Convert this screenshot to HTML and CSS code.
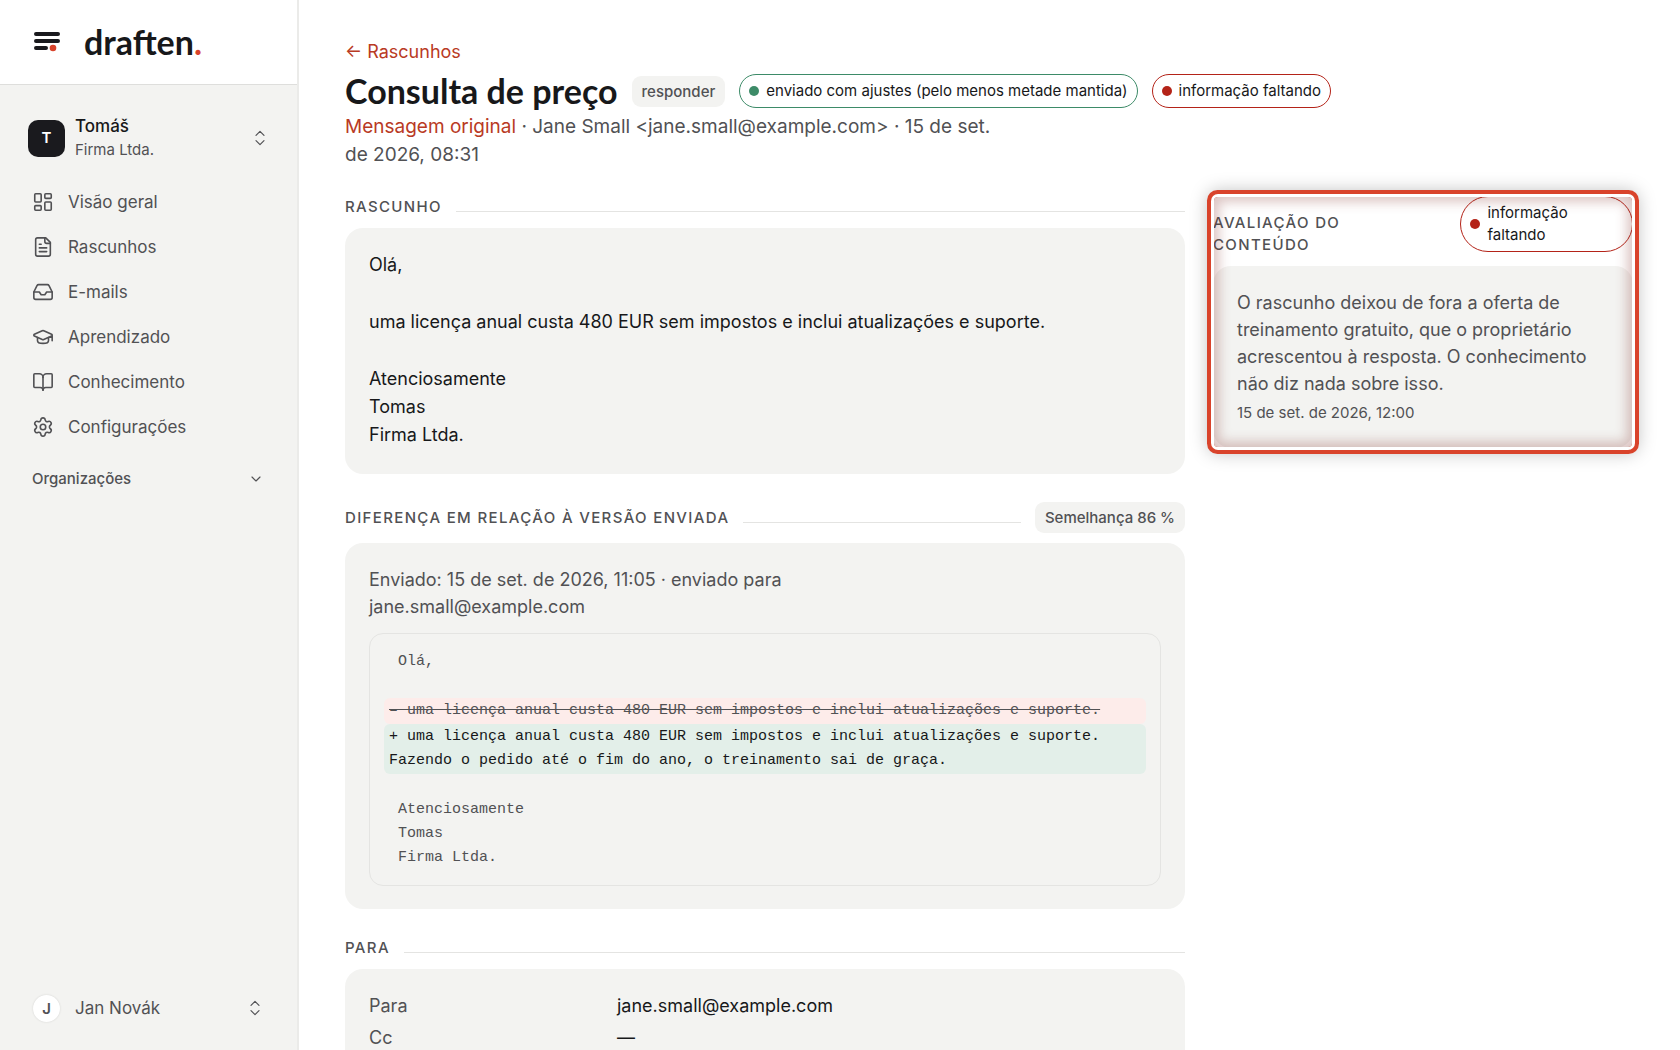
FILE: index.html
```html
<!DOCTYPE html>
<html lang="pt">
<head>
<meta charset="utf-8">
<meta name="viewport" content="width=device-width, initial-scale=1">
<title>Consulta de preço – draften</title>
<link rel="stylesheet" href="styles.css">
</head>
<body>
<div class="app">
  <aside class="sidebar">
    <a class="brand" href="#">
      <svg class="brand-mark" viewBox="0 0 26 20" aria-hidden="true">
        <path d="M2 2h22M2 9h22M2 16h10" fill="none" stroke="#1a1a1e" stroke-width="4" stroke-linecap="round"/>
        <circle cx="19" cy="16" r="3.3" fill="#d9432b"/>
      </svg>
      <span class="brand-name">draften<span class="brand-dot">.</span></span>
    </a>
    <div class="sidebar-body">
      <button class="switcher" type="button">
        <span class="avatar">T</span>
        <span class="switcher-text"><span class="switcher-name">Tomáš</span><span class="switcher-org">Firma Ltda.</span></span>
        <svg class="icon-sm" viewBox="0 0 24 24" aria-hidden="true"><path d="m6 16 6 6 6-6M6 8l6-6 6 6"/></svg>
      </button>
      <nav class="nav">
        <a href="#"><svg class="icon" viewBox="0 0 24 24" aria-hidden="true"><rect width="7" height="9" x="3" y="3" rx="1"/><rect width="7" height="5" x="14" y="3" rx="1"/><rect width="7" height="9" x="14" y="12" rx="1"/><rect width="7" height="5" x="3" y="16" rx="1"/></svg>Visão geral</a>
        <a href="#"><svg class="icon" viewBox="0 0 24 24" aria-hidden="true"><path d="M15 2H6a2 2 0 0 0-2 2v16a2 2 0 0 0 2 2h12a2 2 0 0 0 2-2V7Z"/><path d="M14 2v4a2 2 0 0 0 2 2h4M10 9H8M16 13H8M16 17H8"/></svg>Rascunhos</a>
        <a href="#"><svg class="icon" viewBox="0 0 24 24" aria-hidden="true"><path d="M22 12h-6l-2 3h-4l-2-3H2"/><path d="M5.45 5.11 2 12v6a2 2 0 0 0 2 2h16a2 2 0 0 0 2-2v-6l-3.45-6.89A2 2 0 0 0 16.76 4H7.24a2 2 0 0 0-1.79 1.11z"/></svg>E-mails</a>
        <a href="#"><svg class="icon" viewBox="0 0 24 24" aria-hidden="true"><path d="M21.42 10.922a1 1 0 0 0-.019-1.838L12.83 5.18a2 2 0 0 0-1.66 0L2.6 9.08a1 1 0 0 0 0 1.832l8.57 3.908a2 2 0 0 0 1.66 0zM22 10v6"/><path d="M6 12.5V16a6 3 0 0 0 12 0v-3.5"/></svg>Aprendizado</a>
        <a href="#"><svg class="icon" viewBox="0 0 24 24" aria-hidden="true"><path d="M12 7v14"/><path d="M3 18a1 1 0 0 1-1-1V4a1 1 0 0 1 1-1h5a4 4 0 0 1 4 4 4 4 0 0 1 4-4h5a1 1 0 0 1 1 1v13a1 1 0 0 1-1 1h-6a3 3 0 0 0-3 3 3 3 0 0 0-3-3z"/></svg>Conhecimento</a>
        <a href="#"><svg class="icon" viewBox="0 0 24 24" aria-hidden="true"><path d="M9.671 4.136a2.34 2.34 0 0 1 4.659 0 2.34 2.34 0 0 0 3.319 1.915 2.34 2.34 0 0 1 2.33 4.033 2.34 2.34 0 0 0 0 3.831 2.34 2.34 0 0 1-2.33 4.033 2.34 2.34 0 0 0-3.319 1.915 2.34 2.34 0 0 1-4.659 0 2.34 2.34 0 0 0-3.32-1.915 2.34 2.34 0 0 1-2.33-4.033 2.34 2.34 0 0 0 0-3.831A2.34 2.34 0 0 1 6.35 6.051a2.34 2.34 0 0 0 3.319-1.915"/><circle cx="12" cy="12" r="3"/></svg>Configurações</a>
      </nav>
      <button class="group" type="button">Organizações
        <svg class="icon-sm" viewBox="0 0 24 24" aria-hidden="true"><path d="m6 9 6 6 6-6"/></svg>
      </button>
      <button class="account" type="button">
        <span class="account-initial">J</span>
        <span class="account-name">Jan Novák</span>
        <svg class="icon-sm" viewBox="0 0 24 24" aria-hidden="true"><path d="m6 16 6 6 6-6M6 8l6-6 6 6"/></svg>
      </button>
    </div>
  </aside>

  <main class="main">
    <header class="page-head">
      <a class="link back" href="#">← Rascunhos</a>
      <div class="title-row">
        <h1>Consulta de preço</h1>
        <span class="badge">responder</span>
        <span class="pill pill-green">enviado com ajustes (pelo menos metade mantida)</span>
        <span class="pill pill-red">informação faltando</span>
      </div>
      <p class="meta"><a class="link" href="#">Mensagem original</a> · Jane Small &lt;jane.small@example.com&gt; · 15 de set. de 2026, 08:31</p>
    </header>

    <div class="columns">
      <div class="column">
        <section>
          <div class="section-head"><h2>Rascunho</h2><span class="rule"></span></div>
          <div class="card draft">
            <p>Olá,</p>
            <p>uma licença anual custa 480 EUR sem impostos e inclui atualizações e suporte.</p>
            <p>Atenciosamente<br>Tomas<br>Firma Ltda.</p>
          </div>
        </section>

        <section>
          <div class="section-head"><h2>Diferença em relação à versão enviada</h2><span class="rule"></span><span class="badge">Semelhança 86 %</span></div>
          <div class="card">
            <p class="note">Enviado: 15 de set. de 2026, 11:05 · enviado para jane.small@example.com</p>
            <div class="diff">
              <div class="line"> Olá,</div>
              <div class="line"> </div>
              <del class="line">– uma licença anual custa 480 EUR sem impostos e inclui atualizações e suporte.</del>
              <ins class="line">+ uma licença anual custa 480 EUR sem impostos e inclui atualizações e suporte. Fazendo o pedido até o fim do ano, o treinamento sai de graça.</ins>
              <div class="line"> </div>
              <div class="line"> Atenciosamente</div>
              <div class="line"> Tomas</div>
              <div class="line"> Firma Ltda.</div>
            </div>
          </div>
        </section>

        <section>
          <div class="section-head"><h2>Para</h2><span class="rule"></span></div>
          <dl class="card fields">
            <dt>Para</dt><dd>jane.small@example.com</dd>
            <dt>Cc</dt><dd>—</dd>
          </dl>
        </section>
      </div>

      <section class="review">
        <div class="section-head review-head"><h2>Avaliação do conteúdo</h2><span class="rule"></span><span class="pill pill-red">informação faltando</span></div>
        <div class="card">
          <p class="note">O rascunho deixou de fora a oferta de treinamento gratuito, que o proprietário acrescentou à resposta. O conhecimento não diz nada sobre isso.</p>
          <p class="date">15 de set. de 2026, 12:00</p>
        </div>
      </section>
    </div>
  </main>
</div>
</body>
</html>
```
FILE: styles.css
```css
:root {
  --ink: #17181a;
  --muted: #515154;
  --surface: #f3f3f1;
  --line: #e4e4e2;
  --accent: #b93a24;
  --red: #b42318;
  --green: #3d8b68;
}

* { box-sizing: border-box; }

body {
  margin: 0;
  background: #fff;
  color: var(--ink);
  font: 18px/28px Inter, "Liberation Sans", sans-serif;
}

h1, h2, p, dl, dd { margin: 0; }

a { color: inherit; text-decoration: none; }

button {
  display: flex;
  align-items: center;
  padding: 0;
  border: 0;
  background: none;
  color: inherit;
  font: inherit;
  text-align: left;
  cursor: pointer;
}

.app { display: flex; height: 100vh; }

/* Sidebar */
.sidebar {
  display: flex;
  flex: 0 0 299px;
  flex-direction: column;
  border-right: 2px solid #ebebe9;
  background: var(--surface);
  color: var(--muted);
  font-size: 17px;
}

.brand {
  display: flex;
  align-items: center;
  gap: 24px;
  height: 85px;
  padding-left: 34px;
  border-bottom: 1px solid #dededc;
  background: #fff;
}

.brand-mark { width: 26px; height: 20px; }

.brand-name {
  color: var(--ink);
  font: 700 34px/40px Lato, sans-serif;
}

.brand-dot { color: #d9432b; }

.sidebar-body {
  display: flex;
  flex: 1;
  flex-direction: column;
  padding: 28px 28px 24px;
}

.icon, .icon-sm {
  flex: none;
  fill: none;
  stroke: currentColor;
  stroke-width: 1.75;
  stroke-linecap: round;
  stroke-linejoin: round;
}

.icon { width: 22px; height: 22px; }
.icon-sm { width: 16px; height: 16px; margin-left: auto; }

.switcher { gap: 10px; height: 50px; padding-right: 1px; }

.avatar {
  display: grid;
  place-items: center;
  width: 37px;
  height: 37px;
  border-radius: 10px;
  background: #1a1a1e;
  color: #fff;
  font-size: 15px;
  font-weight: 600;
}

.switcher-text { display: grid; line-height: 24px; }
.switcher-name { color: var(--ink); font-size: 17px; font-weight: 500; }
.switcher-org { font-size: 15px; }

.nav { display: grid; padding-top: 16px; }

.nav a {
  display: flex;
  align-items: center;
  gap: 14px;
  height: 45px;
  padding-left: 4px;
}

.group {
  height: 36px;
  margin-top: 12px;
  padding: 0 5px 0 4px;
  font-size: 15px;
  font-weight: 500;
}

.account { gap: 15px; margin-top: auto; padding: 0 6px 0 5px; height: 36px; }

.account-initial {
  display: grid;
  place-items: center;
  width: 27px;
  height: 27px;
  border-radius: 50%;
  background: #fff;
  box-shadow: 0 0 2px #d0d0ce;
  font-size: 15px;
  font-weight: 600;
}

/* Page */
.main {
  flex: 1;
  min-width: 0;
  padding: 38px 47px 48px 46px;
  overflow-y: auto;
  scrollbar-width: none;
}

.link { color: var(--accent); }
.back { display: block; width: fit-content; }

.title-row {
  display: flex;
  align-items: center;
  gap: 14px;
  height: 47px;
  padding-top: 3px;
}

h1 { font: 700 34px/44px Lato, sans-serif; }

.badge {
  padding: 4px 10px;
  border-radius: 9px;
  background: var(--surface);
  color: var(--muted);
  font-size: 15px;
  font-weight: 500;
  line-height: 23px;
  white-space: nowrap;
}

.pill {
  display: flex;
  align-items: center;
  gap: 7px;
  padding: 5px 9px;
  border: 1px solid;
  border-radius: 28px;
  font-size: 15px;
  line-height: 22px;
}

.pill::before {
  content: "";
  flex: none;
  width: 10px;
  height: 10px;
  border-radius: 50%;
}

.pill-green { border-color: var(--green); }
.pill-green::before { background: var(--green); }
.pill-red { border-color: var(--red); }
.pill-red::before { background: var(--red); }

.meta { max-width: 656px; color: var(--muted); font-size: 19px; }

.columns {
  display: grid;
  grid-template-columns: 2fr 1fr;
  align-items: start;
  gap: 28px;
  margin-top: 27px;
}

.column { display: grid; gap: 28px; min-width: 0; }

.section-head {
  display: flex;
  align-items: baseline;
  gap: 14px;
  margin-bottom: 10px;
}

h2 {
  color: var(--muted);
  font-size: 15px;
  font-weight: 500;
  line-height: 22px;
  letter-spacing: 0.09em;
  text-transform: uppercase;
}

.rule { flex: 1; border-bottom: 1px solid var(--line); }

.card {
  padding: 23px 24px;
  border-radius: 18px;
  background: var(--surface);
}

.draft { display: grid; gap: 29px; padding-bottom: 25px; }

.note { max-width: 460px; color: var(--muted); line-height: 27px; }

.diff {
  margin-top: 13px;
  padding: 16px 14px 15px;
  border: 1px solid var(--line);
  border-radius: 14px;
  color: var(--muted);
  font: 15px/24px "Liberation Mono", monospace;
}

.line {
  display: block;
  min-height: 24px;
  padding: 0 5px;
  border-radius: 6px;
  white-space: pre-wrap;
}

del.line { padding: 1px 5px; background: #fdecea; }

ins.line {
  padding: 1px 5px;
  background: #e3efe9;
  color: var(--ink);
  text-decoration: none;
}

.fields {
  display: grid;
  grid-template-columns: 248px 1fr;
  row-gap: 4px;
}

.fields dt { color: var(--muted); }

/* Highlighted review panel */
.review { position: relative; }

.review::after {
  content: "";
  position: absolute;
  inset: 1px;
  border-radius: 4px;
  box-shadow: 0 0 0 3px #fff, 0 0 0 7px #d9432b, 0 0 18px 6px rgba(0, 0, 0, .25), inset 0 0 12px 5px rgba(130, 45, 40, .28);
  pointer-events: none;
}

.review .card { padding-bottom: 20px; }
.review-head { min-height: 60px; }
.review-head h2 { align-self: flex-end; }
.review-head .pill { align-self: flex-start; }
.date { color: var(--muted); font-size: 15px; line-height: 31px; }
```
